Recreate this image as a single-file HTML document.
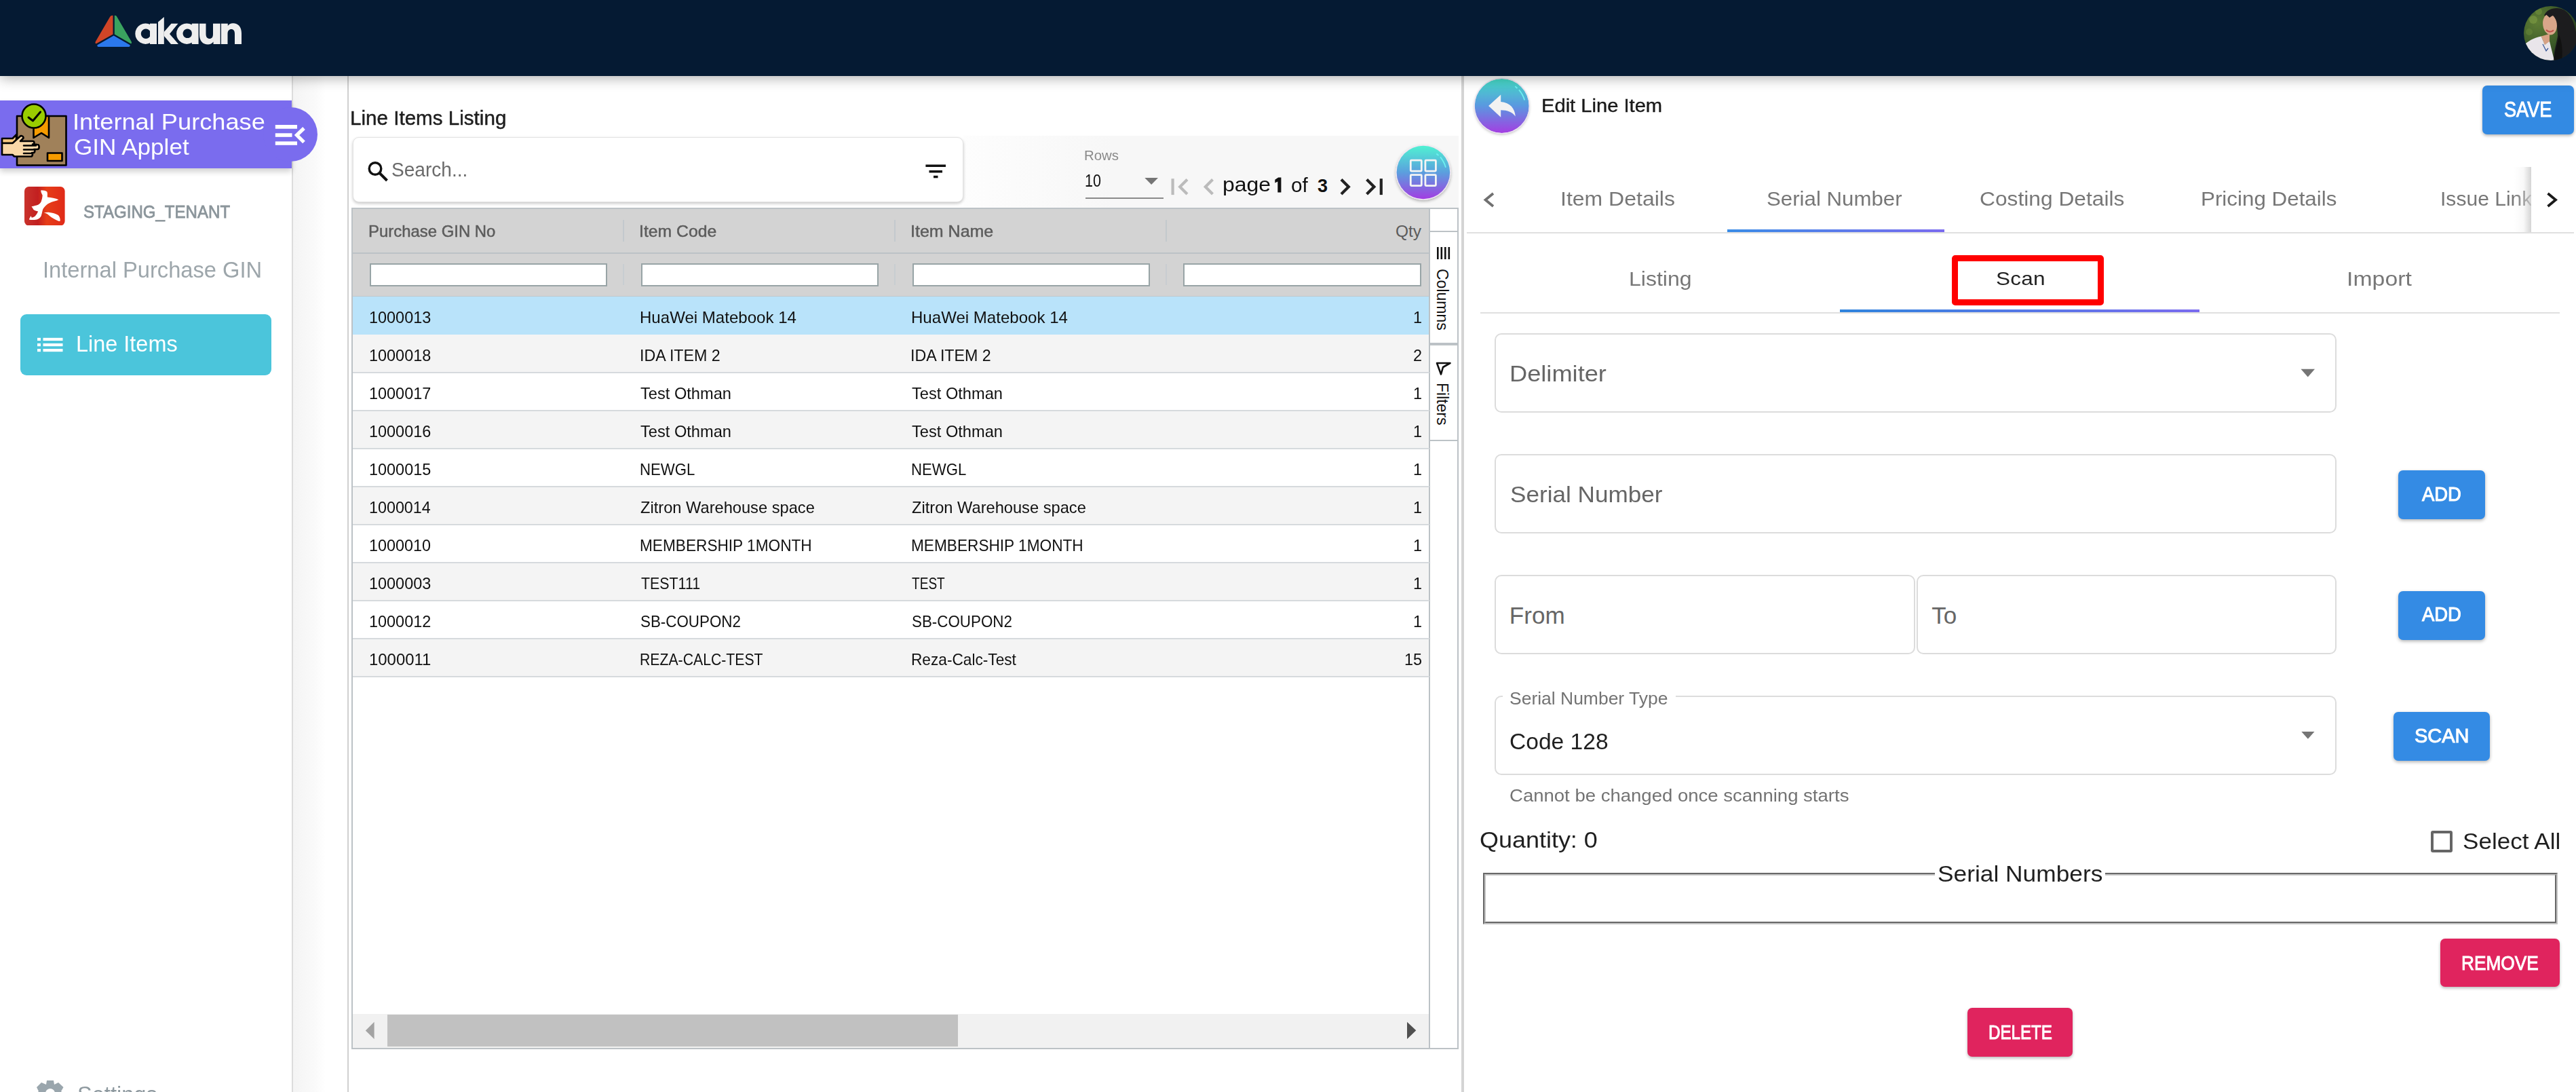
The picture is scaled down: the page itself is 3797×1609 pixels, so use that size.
<!DOCTYPE html>
<html><head><meta charset="utf-8"><title>akaun</title>
<style>
html,body{margin:0;padding:0;}
body{width:3797px;height:1609px;overflow:hidden;position:relative;background:#fff;font-family:"Liberation Sans",sans-serif;}
.b{position:absolute;}
.t{position:absolute;white-space:pre;font-family:"Liberation Sans",sans-serif;}
</style></head><body>
<div class="b" style="left:0.0px;top:112.0px;width:431.0px;height:1497.0px;background:#fff;"></div>
<div class="b" style="left:430.2px;top:112.0px;width:1.6px;height:1497.0px;background:#dcdcdc;"></div>
<div class="b" style="left:432.0px;top:112.0px;width:80.0px;height:1497.0px;background:linear-gradient(to right,#f4f4f4,#fafafa 40%,#fff 60%);"></div>
<div class="b" style="left:512.0px;top:112.0px;width:2.0px;height:1497.0px;background:#d0d0d0;"></div>
<div class="b" style="left:514.0px;top:112.0px;width:1640.0px;height:1497.0px;background:#fff;"></div>
<div class="b" style="left:2154.0px;top:112.0px;width:4.0px;height:1497.0px;background:#d4d4d4;"></div>
<div class="b" style="left:2158.0px;top:112.0px;width:1639.0px;height:1497.0px;background:#fff;"></div>
<div class="b" style="left:0.0px;top:0.0px;width:3797.0px;height:112.0px;background:#051a33;box-shadow:0 3px 18px rgba(0,0,0,0.32);z-index:5;"></div>
<svg class="b" style="left:130px;top:10px;z-index:6" width="240" height="80" viewBox="130 10 240 80">
<path d="M166.5 23 L166.5 50.5 L142.5 64 C140.5 65 140 63 141 61 L162 25 C163 23.5 165 22.5 166.5 23Z" fill="#d04527"/>
<path d="M168.8 23 L168.8 50.5 L192.3 64 C194 65 194.5 63 193.5 61 L172.5 25 C171.5 23.5 170.5 22.5 168.8 23Z" fill="#3aa35f"/>
<path d="M167.6 52.5 L144 66 C142.5 67 143.5 69 145.5 69 L189.5 69 C191.5 69 192.5 67 191 66Z" fill="#2b78ec"/>
<g fill="#eeeeee">
<path fill-rule="evenodd" d="M214.5 34.5 a15.2 15.2 0 1 0 0.01 0Z M215 42.5 a7.2 7.2 0 1 0 0.01 0Z"/>
<rect x="221" y="34.7" width="10" height="30.3"/>
<path d="M233 32.4 L241.8 25 L241.8 65 L233 65Z"/>
<path d="M241.8 47 L252.5 34.7 L262.5 34.7 L250 50 L263 65 L252 65 L241.8 53Z"/>
<path fill-rule="evenodd" d="M275.3 34.5 a15.2 15.2 0 1 0 0.01 0Z M276.3 42.5 a6.8 6.8 0 1 0 0.01 0Z"/>
<rect x="282.8" y="34.7" width="9.8" height="30.3"/>
<path d="M294 34.7 L303.5 34.7 L303.5 50 C303.5 55 306 57 309 57 C312 57 314 55 314 50 L314 34.7 L324.7 34.7 L324.7 65 L314.5 65 L314.5 61.5 C312.5 64 310 65.5 306.5 65.5 C299 65.5 294 60.5 294 51Z"/>
<path d="M326 65 L335.5 65 L335.5 50 C335.5 45 338 43 341 43 C344 43 346 45 346 50 L346 65 L356 65 L356 49 C356 39.5 351 34.2 343.5 34.2 C340 34.2 337.5 35.5 335.8 38 L335.8 34.7 L326 34.7Z"/>
</g>
</svg>
<svg class="b" style="left:3719.6px;top:8.9px;z-index:6" width="80" height="80" viewBox="0 0 80 80">
<defs><clipPath id="av"><circle cx="40" cy="40" r="40"/></clipPath>
<radialGradient id="fol" cx="0.25" cy="0.3" r="0.8"><stop offset="0" stop-color="#5f7d35"/><stop offset="0.6" stop-color="#3c5a28"/><stop offset="1" stop-color="#24381c"/></radialGradient></defs>
<g clip-path="url(#av)">
<rect width="80" height="80" fill="url(#fol)"/>
<circle cx="14" cy="20" r="6" fill="#7e9c45" opacity="0.6"/>
<circle cx="22" cy="8" r="5" fill="#6f8f3c" opacity="0.6"/>
<circle cx="8" cy="38" r="5" fill="#6a8a3a" opacity="0.5"/>
<path d="M30 14 C34 3 50 0 60 6 C72 14 76 30 78 45 C80 60 76 72 70 80 L44 80 C44 68 48 56 50 44 C50 34 48 24 42 16 Z" fill="#1c1c1e"/>
<path d="M25.6 44.6 L38 41 L38 53 L31 57 Z" fill="#d6a184"/>
<ellipse cx="38.5" cy="27" rx="10.3" ry="15.5" transform="rotate(-8 38.5 27)" fill="#d9a68a"/>
<path d="M33 35 C36 38.5 41 38.5 44 35.5" stroke="#c0504a" stroke-width="2" fill="none"/>
<path d="M32 12 C36 8 46 8 50 14 C47 13 42 13 38 17 C36 15 34 13 32 12Z" fill="#1c1c1e"/>
<path d="M0 58 C6 52 14 47 25.6 44.6 L31 57 L38 52 L45 80 L0 80 Z" fill="#e9e5ea"/>
<path d="M28 56 L33 66 L36 62" stroke="#3b5a9a" stroke-width="1.3" fill="none"/>
<path d="M44 80 C46 66 50 54 52 42 C56 52 58 64 56 80Z" fill="#111"/>
</g></svg>
<div class="b" style="left:0.0px;top:148.0px;width:430.0px;height:99.5px;background:#7a6cee;box-shadow:0 5px 8px rgba(0,0,0,0.18);z-index:2;"></div>
<div class="b" style="left:388.0px;top:157.7px;width:80.0px;height:80.0px;background:#7a6cee;border-radius:40px;z-index:2;"></div>
<svg class="b" style="left:0;top:140px;z-index:3" width="110" height="110" viewBox="0 0 110 110">
<g stroke="#000" stroke-width="2.6" stroke-linejoin="round" stroke-linecap="round">
<rect x="25" y="31" width="72.5" height="72.5" fill="#a0815a"/>
<path d="M49.5 31 L72 31 L72 63 L61 56 L49.5 63Z" fill="#f59b00"/>
<rect x="70" y="85.5" width="21.5" height="11.5" fill="#f59b00"/>
<circle cx="50" cy="31" r="17.5" fill="#99cc00"/>
<path d="M42 33 L48.5 38 L59.5 25" fill="none" stroke-width="3"/>
<path d="M3 64 L18.5 64 L24 58.5 L24 71 L3 71Z" fill="#f8c880"/>
<path d="M3 71 L18.5 71 L29.5 61 C31 59.5 34.5 60 34.5 63.5 L30 68 L48 68 C51 68 51.5 72.5 48 72.5 L55 73 C58.5 73 58.5 80 55 80 L50 80 C52 80 52 85 49 85 L47 85 C48.5 85 48.5 90.5 45.5 90.5 L21 90.5 L18.5 88 L3 88Z" fill="#fad8a8"/>
<path d="M35 74.5 L53 74.5 M35 80.5 L51 80.5 M35 86 L47 86" fill="none"/>
</g></svg>
<svg class="b" style="left:400px;top:180px;z-index:3" width="55" height="40" viewBox="400 180 55 40">
<rect x="405.8" y="184" width="32.2" height="5.7" fill="#fff"/>
<rect x="405.8" y="196.3" width="24.7" height="5.5" fill="#fff"/>
<rect x="405.8" y="208.4" width="32.2" height="5.4" fill="#fff"/>
<path d="M448 189 L437.5 199 L448 209.5" stroke="#fff" stroke-width="5.2" fill="none"/>
</svg>
<div class="t" style="left:107.0px;top:162.7px;font-size:33.33px;line-height:33.33px;letter-spacing:0.00px;color:#fff;font-weight:normal;transform-origin:0 0;transform:scaleX(1.0867);z-index:3;">Internal Purchase</div>
<div class="t" style="left:108.5px;top:199.7px;font-size:33.33px;line-height:33.33px;letter-spacing:0.00px;color:#fff;font-weight:normal;transform-origin:0 0;transform:scaleX(1.0526);z-index:3;">GIN Applet</div>
<svg class="b" style="left:36.3px;top:274.9px" width="59.6" height="57.4" viewBox="0 0 59.6 57.4">
<defs><linearGradient id="tl" x1="0" x2="1"><stop offset="0" stop-color="#c9332c"/><stop offset="0.33" stop-color="#c21f20"/><stop offset="0.55" stop-color="#e63d18"/><stop offset="1" stop-color="#e02a18"/></linearGradient></defs>
<rect width="59.6" height="57.4" rx="6.5" fill="url(#tl)"/>
<path fill="#fff" d="M24.4 5.3 C28 5.3 31.5 6 33.3 7.5 C34.5 10 33.5 13 33.9 15.5 C39 16 46 17 50.4 19.2 C47 21 43 21.5 39.9 22.7 C35.5 24.5 32.5 26.5 30.7 28.7 C28.5 31 27 33 26.7 35.3 C26 38 25.5 41 24.7 43.2 C23.5 45.5 22 47 20.1 47.8 C17.5 49 15.5 49.1 13.5 49.1 C11 49.2 8.5 49 6.9 48.5 C7.5 46.5 8.5 44.5 9.6 43.2 C10 44 10.3 45 10.9 45.8 C12.5 45.5 14 44.8 15.5 43.8 C17.5 41.5 19.2 39 20.1 36.6 C17.5 36 15 35 13.5 34 C12.3 32 11.3 30.5 10.5 29.3 C14 28.3 17.5 27.8 20.1 26.7 C22.5 25.5 24 24 24.7 22.1 C25.8 19 26.5 16 26.7 12.9 C26 11 24.8 9.5 24.4 7.6 Z"/>
<path fill="#fff" d="M28.7 38.6 C31 38 34 37.8 36.6 37.9 C41 38.3 46 39.8 49.8 41.9 C52 43.8 52.8 47 52.7 50.4 L51.1 51.1 C47 49 43 47.5 39.9 45.2 C37 43 35 41 33.3 39.9 C31.5 39.2 30 38.9 28.7 38.6 Z"/>
</svg>
<div class="t" style="left:123.4px;top:299.5px;font-size:25.80px;line-height:25.80px;letter-spacing:0.00px;color:#8b959b;font-weight:normal;transform-origin:0 0;transform:scaleX(0.9325);-webkit-text-stroke:0.8px #8b959b;">STAGING_TENANT</div>
<div class="t" style="left:63.0px;top:380.7px;font-size:33.04px;line-height:33.04px;letter-spacing:0.00px;color:#9da6ab;font-weight:normal;transform-origin:0 0;transform:scaleX(0.9888);">Internal Purchase GIN</div>
<div class="b" style="left:30.0px;top:463.0px;width:370.0px;height:90.0px;background:#4bc5db;border-radius:9px;"></div>
<svg class="b" style="left:50px;top:490px" width="50" height="35" viewBox="50 490 50 35">
<g fill="#fff"><rect x="55" y="497.8" width="5" height="4.2"/><rect x="63.5" y="497.8" width="29" height="4.2"/>
<rect x="55" y="506" width="5" height="4.2"/><rect x="63.5" y="506" width="29" height="4.2"/>
<rect x="55" y="514" width="5" height="4.2"/><rect x="63.5" y="514" width="29" height="4.2"/></g></svg>
<div class="t" style="left:112.0px;top:490.8px;font-size:32.75px;line-height:32.75px;letter-spacing:0.00px;color:#fff;font-weight:normal;transform-origin:0 0;transform:scaleX(0.9902);">Line Items</div>
<svg class="b" style="left:50px;top:1585px" width="50" height="30" viewBox="50 1585 50 30">
<path fill="#9aa6ad" fill-rule="evenodd" d="M69 1592 L79 1592 L80 1598 L86 1595 L93.5 1602 L90 1608 L95 1612 L95 1620 L50 1620 L52 1612 L57 1608 L54 1602 L61 1595 L68 1598Z M74 1604 a7 7 0 1 0 0.01 0Z"/>
</svg>
<div class="t" style="left:114.3px;top:1595.9px;font-size:33.33px;line-height:33.33px;letter-spacing:0.00px;color:#8e999f;font-weight:normal;transform-origin:0 0;transform:scaleX(0.9779);">Settings</div>
<div class="t" style="left:515.8px;top:158.6px;font-size:30.29px;line-height:30.29px;letter-spacing:0.00px;color:#1f1f1f;font-weight:normal;transform-origin:0 0;transform:scaleX(0.9775);-webkit-text-stroke:0.5px #1f1f1f;">Line Items Listing</div>
<div class="b" style="left:1420.0px;top:200.0px;width:730.0px;height:106.0px;background:linear-gradient(to right,#fdfdfd,#f7f7f7 30%,#f7f7f7);"></div>
<div class="b" style="left:519.5px;top:201.5px;width:900.5px;height:96.0px;background:#fff;border-radius:9px;border:1px solid #e3e3e3;box-sizing:border-box;box-shadow:0 2px 4px rgba(0,0,0,0.22);"></div>
<svg class="b" style="left:538px;top:232px" width="40" height="40" viewBox="538 232 40 40">
<circle cx="553" cy="248.5" r="8.8" stroke="#111" stroke-width="3.4" fill="none"/>
<path d="M559.5 255 L570.5 266" stroke="#111" stroke-width="4" stroke-linecap="butt"/>
</svg>
<div class="t" style="left:577.2px;top:236.0px;font-size:28.70px;line-height:28.70px;letter-spacing:0.00px;color:#6b6b6b;font-weight:normal;transform-origin:0 0;transform:scaleX(0.9789);">Search...</div>
<svg class="b" style="left:1360px;top:238px" width="40" height="30" viewBox="1360 238 40 30">
<rect x="1364.4" y="242.5" width="29.6" height="3.5" fill="#111"/>
<rect x="1369.5" y="251" width="19.5" height="3.5" fill="#111"/>
<rect x="1376" y="258.8" width="6.5" height="3.5" fill="#111"/>
</svg>
<div class="t" style="left:1598.2px;top:220.3px;font-size:19.42px;line-height:19.42px;letter-spacing:0.00px;color:#8a8a8a;font-weight:normal;transform-origin:0 0;transform:scaleX(1.0495);">Rows</div>
<div class="t" style="left:1598.8px;top:253.0px;font-size:26.67px;line-height:26.67px;letter-spacing:0.00px;color:#111;font-weight:normal;transform-origin:0 0;transform:scaleX(0.8075);">10</div>
<svg class="b" style="left:1680px;top:255px" width="35" height="40" viewBox="1680 255 35 40"><path d="M1687.3 262.1 L1707 262.1 L1697.15 272.1Z" fill="#757575"/></svg>
<div class="b" style="left:1599.8px;top:290.7px;width:115.2px;height:2.3px;background:#8a8a8a;"></div>
<svg class="b" style="left:1720px;top:255px" width="330" height="40" viewBox="1720 255 330 40">
<g fill="none" stroke-width="4.2">
<path d="M1728.6 263.2 L1728.6 287.1" stroke="#bbb"/>
<path d="M1750 264.5 L1739.2 275.2 L1750 286" stroke="#bbb"/>
<path d="M1787.5 264.5 L1776.8 275.2 L1787.5 286" stroke="#bbb"/>
<path d="M1977 264.5 L1987.8 275.2 L1977 286" stroke="#222"/>
<path d="M2014.6 264.5 L2025.4 275.2 L2014.6 286" stroke="#222"/>
<path d="M2035.8 263.2 L2035.8 287.1" stroke="#222"/>
</g></svg>
<div class="t" style="left:1801.6px;top:256.8px;font-size:29.50px;line-height:29.50px;letter-spacing:0.00px;color:#111;font-weight:normal;transform-origin:0 0;transform:scaleX(1.0843);">page</div>
<svg class="b" style="left:1875px;top:258px" width="20" height="30" viewBox="1875 258 20 30"><path d="M1879.3 264.8 L1884.2 261.4 L1888.4 261.4 L1888.4 283.6 L1883.3 283.6 L1883.3 267.6 L1879.3 269.6 Z" fill="#111"/></svg>
<div class="t" style="left:1903.0px;top:257.8px;font-size:29.50px;line-height:29.50px;letter-spacing:0.00px;color:#111;font-weight:normal;transform-origin:0 0;transform:scaleX(1.0085);">of</div>
<div class="t" style="left:1942.0px;top:260.7px;font-size:27.00px;line-height:27.00px;letter-spacing:0.00px;color:#111;font-weight:bold;">3</div>
<svg class="b" style="left:2043px;top:200px;overflow:visible" width="110" height="110" viewBox="2043 200 110 110">
<defs><linearGradient id="gv" x1="0" y1="0" x2="0" y2="1"><stop offset="0" stop-color="#50f2d2"/><stop offset="0.5" stop-color="#5b9fde"/><stop offset="1" stop-color="#a23de2"/></linearGradient>
<filter id="sh2" x="-20%" y="-20%" width="140%" height="140%"><feDropShadow dx="0" dy="2" stdDeviation="2.2" flood-opacity="0.3"/></filter></defs>
<circle cx="2097.9" cy="254" r="40.5" fill="#efe6f3" filter="url(#sh2)"/>
<circle cx="2097.9" cy="254" r="39.3" fill="url(#gv)"/>
<g fill="none" stroke="#f4f4f4" stroke-width="2.8" stroke-linejoin="round">
<rect x="2079.3" y="236.2" width="16" height="15.9" rx="1"/><rect x="2100.9" y="236.2" width="15.5" height="15.9" rx="1"/>
<rect x="2079.3" y="257.7" width="16" height="15.9" rx="1"/><rect x="2100.9" y="257.7" width="15.5" height="15.9" rx="1"/>
</g>
<path d="M2117.3 226.5 L2120.5 229 M2123 231.3 C2126.5 235.5 2129.3 241 2131 246.7" stroke="#6ff0f0" stroke-width="1.8" fill="none"/>
</svg>
<div class="b" style="left:518.0px;top:306.0px;width:1632.0px;height:1240.0px;border:2px solid #bcc2c6;box-sizing:border-box;background:#fff;"></div>
<div class="b" style="left:520.0px;top:308.0px;width:1587.0px;height:129.0px;background:#d3d3d3;"></div>
<div class="b" style="left:520.0px;top:371.5px;width:1587.0px;height:2.0px;background:#bcc2c6;"></div>
<div class="b" style="left:520.0px;top:435.5px;width:1587.0px;height:1.5px;background:#c2c7cb;"></div>
<div class="b" style="left:918.0px;top:324.0px;width:2.0px;height:32.0px;background:#c3c9cd;"></div>
<div class="b" style="left:918.0px;top:389.0px;width:2.0px;height:30.5px;background:#c8cdd1;"></div>
<div class="b" style="left:1318.0px;top:324.0px;width:2.0px;height:32.0px;background:#c3c9cd;"></div>
<div class="b" style="left:1318.0px;top:389.0px;width:2.0px;height:30.5px;background:#c8cdd1;"></div>
<div class="b" style="left:1718.0px;top:324.0px;width:2.0px;height:32.0px;background:#c3c9cd;"></div>
<div class="b" style="left:1718.0px;top:389.0px;width:2.0px;height:30.5px;background:#c8cdd1;"></div>
<div class="b" style="left:544.7px;top:387.9px;width:350.5px;height:34.5px;background:#fff;border:2px solid #98a4a6;box-sizing:border-box;"></div>
<div class="b" style="left:944.6px;top:387.9px;width:350.4px;height:34.5px;background:#fff;border:2px solid #98a4a6;box-sizing:border-box;"></div>
<div class="b" style="left:1344.6px;top:387.9px;width:350.6px;height:34.5px;background:#fff;border:2px solid #98a4a6;box-sizing:border-box;"></div>
<div class="b" style="left:1744.3px;top:387.9px;width:350.7px;height:34.5px;background:#fff;border:2px solid #98a4a6;box-sizing:border-box;"></div>
<div class="t" style="left:542.7px;top:328.9px;font-size:24.50px;line-height:24.50px;letter-spacing:0.00px;color:#5c5c5c;font-weight:normal;transform-origin:0 0;transform:scaleX(0.9759);-webkit-text-stroke:0.5px #5c5c5c;">Purchase GIN No</div>
<div class="t" style="left:942.3px;top:328.9px;font-size:24.50px;line-height:24.50px;letter-spacing:0.00px;color:#5c5c5c;font-weight:normal;transform-origin:0 0;transform:scaleX(1.0105);-webkit-text-stroke:0.5px #5c5c5c;">Item Code</div>
<div class="t" style="left:1342.3px;top:328.9px;font-size:24.50px;line-height:24.50px;letter-spacing:0.00px;color:#5c5c5c;font-weight:normal;transform-origin:0 0;transform:scaleX(1.0206);-webkit-text-stroke:0.5px #5c5c5c;">Item Name</div>
<div class="t" style="left:2057.0px;top:328.9px;font-size:24.50px;line-height:24.50px;letter-spacing:0.00px;color:#5c5c5c;font-weight:normal;">Qty</div>
<div class="b" style="left:520.0px;top:437.0px;width:1587.0px;height:56.0px;background:#b9e3fa;"></div>
<div class="t" style="left:543.5px;top:455.5px;font-size:24.00px;line-height:24.00px;letter-spacing:0.00px;color:#111;font-weight:normal;transform-origin:0 0;transform:scaleX(0.9768);">1000013</div>
<div class="t" style="left:942.9px;top:455.5px;font-size:24.00px;line-height:24.00px;letter-spacing:0.00px;color:#111;font-weight:normal;transform-origin:0 0;transform:scaleX(1.0024);">HuaWei Matebook 14</div>
<div class="t" style="left:1342.6px;top:455.5px;font-size:24.00px;line-height:24.00px;letter-spacing:0.00px;color:#111;font-weight:normal;transform-origin:0 0;transform:scaleX(1.0024);">HuaWei Matebook 14</div>
<div class="t" style="left:2083.0px;top:455.5px;font-size:24.00px;line-height:24.00px;letter-spacing:0.00px;color:#111;font-weight:normal;transform-origin:0 0;transform:scaleX(0.9770);">1</div>
<div class="b" style="left:520.0px;top:493.0px;width:1587.0px;height:56.0px;background:#f4f4f4;"></div>
<div class="b" style="left:520.0px;top:548.0px;width:1587.0px;height:2.0px;background:#d6dadd;z-index:1;"></div>
<div class="t" style="left:543.5px;top:511.5px;font-size:24.00px;line-height:24.00px;letter-spacing:0.00px;color:#111;font-weight:normal;transform-origin:0 0;transform:scaleX(0.9768);">1000018</div>
<div class="t" style="left:942.7px;top:511.5px;font-size:24.00px;line-height:24.00px;letter-spacing:0.00px;color:#111;font-weight:normal;transform-origin:0 0;transform:scaleX(0.9677);">IDA ITEM 2</div>
<div class="t" style="left:1342.4px;top:511.5px;font-size:24.00px;line-height:24.00px;letter-spacing:0.00px;color:#111;font-weight:normal;transform-origin:0 0;transform:scaleX(0.9677);">IDA ITEM 2</div>
<div class="t" style="left:2083.0px;top:511.5px;font-size:24.00px;line-height:24.00px;letter-spacing:0.00px;color:#111;font-weight:normal;transform-origin:0 0;transform:scaleX(0.9770);">2</div>
<div class="b" style="left:520.0px;top:549.0px;width:1587.0px;height:56.0px;background:#fff;"></div>
<div class="b" style="left:520.0px;top:604.0px;width:1587.0px;height:2.0px;background:#d6dadd;z-index:1;"></div>
<div class="t" style="left:543.5px;top:567.5px;font-size:24.00px;line-height:24.00px;letter-spacing:0.00px;color:#111;font-weight:normal;transform-origin:0 0;transform:scaleX(0.9768);">1000017</div>
<div class="t" style="left:944.4px;top:567.5px;font-size:24.00px;line-height:24.00px;letter-spacing:0.00px;color:#111;font-weight:normal;transform-origin:0 0;transform:scaleX(0.9843);">Test Othman</div>
<div class="t" style="left:1344.1px;top:567.5px;font-size:24.00px;line-height:24.00px;letter-spacing:0.00px;color:#111;font-weight:normal;transform-origin:0 0;transform:scaleX(0.9843);">Test Othman</div>
<div class="t" style="left:2083.0px;top:567.5px;font-size:24.00px;line-height:24.00px;letter-spacing:0.00px;color:#111;font-weight:normal;transform-origin:0 0;transform:scaleX(0.9770);">1</div>
<div class="b" style="left:520.0px;top:605.0px;width:1587.0px;height:56.0px;background:#f4f4f4;"></div>
<div class="b" style="left:520.0px;top:660.0px;width:1587.0px;height:2.0px;background:#d6dadd;z-index:1;"></div>
<div class="t" style="left:543.5px;top:623.5px;font-size:24.00px;line-height:24.00px;letter-spacing:0.00px;color:#111;font-weight:normal;transform-origin:0 0;transform:scaleX(0.9768);">1000016</div>
<div class="t" style="left:944.4px;top:623.5px;font-size:24.00px;line-height:24.00px;letter-spacing:0.00px;color:#111;font-weight:normal;transform-origin:0 0;transform:scaleX(0.9843);">Test Othman</div>
<div class="t" style="left:1344.1px;top:623.5px;font-size:24.00px;line-height:24.00px;letter-spacing:0.00px;color:#111;font-weight:normal;transform-origin:0 0;transform:scaleX(0.9843);">Test Othman</div>
<div class="t" style="left:2083.0px;top:623.5px;font-size:24.00px;line-height:24.00px;letter-spacing:0.00px;color:#111;font-weight:normal;transform-origin:0 0;transform:scaleX(0.9770);">1</div>
<div class="b" style="left:520.0px;top:661.0px;width:1587.0px;height:56.0px;background:#fff;"></div>
<div class="b" style="left:520.0px;top:716.0px;width:1587.0px;height:2.0px;background:#d6dadd;z-index:1;"></div>
<div class="t" style="left:543.5px;top:679.5px;font-size:24.00px;line-height:24.00px;letter-spacing:0.00px;color:#111;font-weight:normal;transform-origin:0 0;transform:scaleX(0.9768);">1000015</div>
<div class="t" style="left:943.1px;top:679.5px;font-size:24.00px;line-height:24.00px;letter-spacing:0.00px;color:#111;font-weight:normal;transform-origin:0 0;transform:scaleX(0.9243);">NEWGL</div>
<div class="t" style="left:1342.8px;top:679.5px;font-size:24.00px;line-height:24.00px;letter-spacing:0.00px;color:#111;font-weight:normal;transform-origin:0 0;transform:scaleX(0.9243);">NEWGL</div>
<div class="t" style="left:2083.0px;top:679.5px;font-size:24.00px;line-height:24.00px;letter-spacing:0.00px;color:#111;font-weight:normal;transform-origin:0 0;transform:scaleX(0.9770);">1</div>
<div class="b" style="left:520.0px;top:717.0px;width:1587.0px;height:56.0px;background:#f4f4f4;"></div>
<div class="b" style="left:520.0px;top:772.0px;width:1587.0px;height:2.0px;background:#d6dadd;z-index:1;"></div>
<div class="t" style="left:543.5px;top:735.5px;font-size:24.00px;line-height:24.00px;letter-spacing:0.00px;color:#111;font-weight:normal;transform-origin:0 0;transform:scaleX(0.9714);">1000014</div>
<div class="t" style="left:944.2px;top:735.5px;font-size:24.00px;line-height:24.00px;letter-spacing:0.00px;color:#111;font-weight:normal;transform-origin:0 0;transform:scaleX(0.9855);">Zitron Warehouse space</div>
<div class="t" style="left:1343.9px;top:735.5px;font-size:24.00px;line-height:24.00px;letter-spacing:0.00px;color:#111;font-weight:normal;transform-origin:0 0;transform:scaleX(0.9855);">Zitron Warehouse space</div>
<div class="t" style="left:2083.0px;top:735.5px;font-size:24.00px;line-height:24.00px;letter-spacing:0.00px;color:#111;font-weight:normal;transform-origin:0 0;transform:scaleX(0.9770);">1</div>
<div class="b" style="left:520.0px;top:773.0px;width:1587.0px;height:56.0px;background:#fff;"></div>
<div class="b" style="left:520.0px;top:828.0px;width:1587.0px;height:2.0px;background:#d6dadd;z-index:1;"></div>
<div class="t" style="left:543.5px;top:791.5px;font-size:24.00px;line-height:24.00px;letter-spacing:0.00px;color:#111;font-weight:normal;transform-origin:0 0;transform:scaleX(0.9741);">1000010</div>
<div class="t" style="left:943.0px;top:791.5px;font-size:24.00px;line-height:24.00px;letter-spacing:0.00px;color:#111;font-weight:normal;transform-origin:0 0;transform:scaleX(0.9434);">MEMBERSHIP 1MONTH</div>
<div class="t" style="left:1342.7px;top:791.5px;font-size:24.00px;line-height:24.00px;letter-spacing:0.00px;color:#111;font-weight:normal;transform-origin:0 0;transform:scaleX(0.9434);">MEMBERSHIP 1MONTH</div>
<div class="t" style="left:2083.0px;top:791.5px;font-size:24.00px;line-height:24.00px;letter-spacing:0.00px;color:#111;font-weight:normal;transform-origin:0 0;transform:scaleX(0.9770);">1</div>
<div class="b" style="left:520.0px;top:829.0px;width:1587.0px;height:56.0px;background:#f4f4f4;"></div>
<div class="b" style="left:520.0px;top:884.0px;width:1587.0px;height:2.0px;background:#d6dadd;z-index:1;"></div>
<div class="t" style="left:543.5px;top:847.5px;font-size:24.00px;line-height:24.00px;letter-spacing:0.00px;color:#111;font-weight:normal;transform-origin:0 0;transform:scaleX(0.9768);">1000003</div>
<div class="t" style="left:944.5px;top:847.5px;font-size:24.00px;line-height:24.00px;letter-spacing:0.00px;color:#111;font-weight:normal;transform-origin:0 0;transform:scaleX(0.8904);">TEST111</div>
<div class="t" style="left:1344.2px;top:847.5px;font-size:24.00px;line-height:24.00px;letter-spacing:0.00px;color:#111;font-weight:normal;transform-origin:0 0;transform:scaleX(0.7950);">TEST</div>
<div class="t" style="left:2083.0px;top:847.5px;font-size:24.00px;line-height:24.00px;letter-spacing:0.00px;color:#111;font-weight:normal;transform-origin:0 0;transform:scaleX(0.9770);">1</div>
<div class="b" style="left:520.0px;top:885.0px;width:1587.0px;height:56.0px;background:#fff;"></div>
<div class="b" style="left:520.0px;top:940.0px;width:1587.0px;height:2.0px;background:#d6dadd;z-index:1;"></div>
<div class="t" style="left:543.5px;top:903.5px;font-size:24.00px;line-height:24.00px;letter-spacing:0.00px;color:#111;font-weight:normal;transform-origin:0 0;transform:scaleX(0.9768);">1000012</div>
<div class="t" style="left:944.0px;top:903.5px;font-size:24.00px;line-height:24.00px;letter-spacing:0.00px;color:#111;font-weight:normal;transform-origin:0 0;transform:scaleX(0.9323);">SB-COUPON2</div>
<div class="t" style="left:1343.7px;top:903.5px;font-size:24.00px;line-height:24.00px;letter-spacing:0.00px;color:#111;font-weight:normal;transform-origin:0 0;transform:scaleX(0.9323);">SB-COUPON2</div>
<div class="t" style="left:2083.0px;top:903.5px;font-size:24.00px;line-height:24.00px;letter-spacing:0.00px;color:#111;font-weight:normal;transform-origin:0 0;transform:scaleX(0.9770);">1</div>
<div class="b" style="left:520.0px;top:941.0px;width:1587.0px;height:56.0px;background:#f4f4f4;"></div>
<div class="b" style="left:520.0px;top:996.0px;width:1587.0px;height:2.0px;background:#d6dadd;z-index:1;"></div>
<div class="t" style="left:543.5px;top:959.5px;font-size:24.00px;line-height:24.00px;letter-spacing:0.00px;color:#111;font-weight:normal;transform-origin:0 0;transform:scaleX(0.9961);">1000011</div>
<div class="t" style="left:943.1px;top:959.5px;font-size:24.00px;line-height:24.00px;letter-spacing:0.00px;color:#111;font-weight:normal;transform-origin:0 0;transform:scaleX(0.8842);">REZA-CALC-TEST</div>
<div class="t" style="left:1342.7px;top:959.5px;font-size:24.00px;line-height:24.00px;letter-spacing:0.00px;color:#111;font-weight:normal;transform-origin:0 0;transform:scaleX(0.9440);">Reza-Calc-Test</div>
<div class="t" style="left:2070.1px;top:959.5px;font-size:24.00px;line-height:24.00px;letter-spacing:0.00px;color:#111;font-weight:normal;transform-origin:0 0;transform:scaleX(0.9770);">15</div>
<div class="b" style="left:520.0px;top:1494.0px;width:1586.0px;height:50.0px;background:#f1f1f1;"></div>
<div class="b" style="left:571.0px;top:1495.0px;width:840.5px;height:46.5px;background:#c1c1c1;"></div>
<svg class="b" style="left:530px;top:1500px" width="30" height="40" viewBox="530 1500 30 40"><path d="M551.6 1505.8 L551.6 1531 L538.8 1518.4Z" fill="#a3a3a3"/></svg>
<svg class="b" style="left:2065px;top:1500px" width="30" height="40" viewBox="2065 1500 30 40"><path d="M2074 1505.7 L2074 1531 L2087.3 1518.35Z" fill="#505050"/></svg>
<div class="b" style="left:2106.0px;top:308.0px;width:2.0px;height:1236.0px;background:#bcc2c6;"></div>
<div class="b" style="left:2108.0px;top:340.0px;width:40.0px;height:2.0px;background:#bcc2c6;"></div>
<div class="b" style="left:2108.0px;top:505.0px;width:40.0px;height:3.5px;background:#bcc2c6;"></div>
<div class="b" style="left:2108.0px;top:648.0px;width:40.0px;height:2.0px;background:#bcc2c6;"></div>
<svg class="b" style="left:2110px;top:355px" width="35" height="35" viewBox="2110 355 35 35">
<g fill="#111"><rect x="2118" y="364" width="2.6" height="18"/><rect x="2123.5" y="364" width="2.6" height="18"/><rect x="2129" y="364" width="2.6" height="18"/><rect x="2134.5" y="364" width="2.6" height="18"/></g></svg>
<svg class="b" style="left:2110px;top:525px" width="35" height="35" viewBox="2110 525 35 35">
<path d="M2137.5 535 L2118 535 L2124 551.5 L2127 541 Z" fill="none" stroke="#111" stroke-width="2.6" stroke-linejoin="round"/></svg>
<div class="t" style="left:2136.5px;top:396px;font-size:23px;line-height:23px;color:#111;transform-origin:0 0;transform:rotate(90deg) scaleX(1.0)">Columns</div>
<div class="t" style="left:2136.5px;top:564px;font-size:23px;line-height:23px;color:#111;transform-origin:0 0;transform:rotate(90deg) scaleX(1.0)">Filters</div>
<svg class="b" style="left:2165px;top:108px;overflow:visible" width="100" height="100" viewBox="2165 108 100 100">
<defs><linearGradient id="bk" x1="0" y1="0" x2="0" y2="1"><stop offset="0" stop-color="#45dcc6"/><stop offset="0.5" stop-color="#5a98e0"/><stop offset="1" stop-color="#a43ee2"/></linearGradient>
<filter id="sh" x="-20%" y="-20%" width="140%" height="140%"><feDropShadow dx="0" dy="2" stdDeviation="2" flood-opacity="0.3"/></filter></defs>
<circle cx="2213.7" cy="156" r="40" fill="url(#bk)" filter="url(#sh)"/>
<circle cx="2213.7" cy="156" r="40.6" fill="none" stroke="#ece3f2" stroke-width="1.2"/>
<path d="M2194.1 155.9 L2212.2 139.5 L2212.2 150 C2226 151 2233 160 2233.7 171.5 C2229 165 2222 162.2 2212.2 162.2 L2212.2 172.8 Z" fill="#f2f2f2"/>
<path d="M2233.3 127.3 L2236.5 130 M2239 132.3 C2242.5 136.5 2245.5 141.5 2247.2 147.5" stroke="#6ff0f0" stroke-width="1.8" fill="none"/>
</svg>
<div class="t" style="left:2271.9px;top:140.7px;font-size:28.26px;line-height:28.26px;letter-spacing:0.00px;color:#1a1a1a;font-weight:normal;transform-origin:0 0;transform:scaleX(1.0311);-webkit-text-stroke:0.4px #1a1a1a;">Edit Line Item</div>
<div class="b" style="left:3659.0px;top:126.0px;width:135.0px;height:71.5px;background:#338ae3;border-radius:7px;box-shadow:0 2px 4px rgba(0,0,0,0.3);"></div>
<div class="t" style="left:3690.7px;top:145.8px;font-size:30.43px;line-height:30.43px;letter-spacing:0.00px;color:#fff;font-weight:normal;transform-origin:0 0;transform:scaleX(0.8918);-webkit-text-stroke:1px #fff;">SAVE</div>
<div class="b" style="left:2162.0px;top:342.0px;width:1632.0px;height:2.0px;background:#e0e0e0;"></div>
<div class="b" style="left:2546.0px;top:337.6px;width:320.0px;height:4.2px;background:linear-gradient(to right,#3a8ce6,#7a6bef);"></div>
<svg class="b" style="left:2180px;top:278px" width="30" height="35" viewBox="2180 278 30 35"><path d="M2201 285 L2189.5 294.5 L2201 304" stroke="#707070" stroke-width="3.8" fill="none"/></svg>
<div class="t" style="left:2300.1px;top:277.9px;font-size:30.14px;line-height:30.14px;letter-spacing:0.00px;color:#777777;font-weight:normal;transform-origin:0 0;transform:scaleX(1.0620);">Item Details</div>
<div class="t" style="left:2604.2px;top:277.9px;font-size:30.14px;line-height:30.14px;letter-spacing:0.00px;color:#777777;font-weight:normal;transform-origin:0 0;transform:scaleX(1.0363);">Serial Number</div>
<div class="t" style="left:2918.3px;top:277.9px;font-size:30.14px;line-height:30.14px;letter-spacing:0.00px;color:#777777;font-weight:normal;transform-origin:0 0;transform:scaleX(1.0531);">Costing Details</div>
<div class="t" style="left:3244.4px;top:277.9px;font-size:30.14px;line-height:30.14px;letter-spacing:0.00px;color:#777777;font-weight:normal;transform-origin:0 0;transform:scaleX(1.0408);">Pricing Details</div>
<div class="t" style="left:3597.3px;top:277.9px;font-size:30.14px;line-height:30.14px;letter-spacing:0.00px;color:#777777;font-weight:normal;transform-origin:0 0;transform:scaleX(0.9981);">Issue Link</div>
<div class="b" style="left:3706.0px;top:246.0px;width:24.5px;height:96.0px;background:linear-gradient(to right,rgba(230,230,230,0),rgba(235,235,235,0.35) 55%,rgba(205,205,205,0.85));"></div>
<div class="b" style="left:3730.5px;top:246.0px;width:66.5px;height:96.0px;background:#fff;"></div>
<svg class="b" style="left:3745px;top:278px" width="30" height="35" viewBox="3745 278 30 35"><path d="M3755.5 285 L3767 294.5 L3755.5 304" stroke="#1a1a1a" stroke-width="3.8" fill="none"/></svg>
<div class="b" style="left:2182.0px;top:460.0px;width:1591.0px;height:2.0px;background:#e0e0e0;"></div>
<div class="b" style="left:2712.0px;top:456.0px;width:530.0px;height:4.0px;background:linear-gradient(to right,#2f84dd,#7a6bef);"></div>
<div class="t" style="left:2400.7px;top:396.2px;font-size:30.29px;line-height:30.29px;letter-spacing:0.00px;color:#777777;font-weight:normal;transform-origin:0 0;transform:scaleX(1.0566);">Listing</div>
<div class="t" style="left:2942.2px;top:397.2px;font-size:28.12px;line-height:28.12px;letter-spacing:0.26px;color:#222;font-weight:normal;transform-origin:0 0;transform:scaleX(1.1200);">Scan</div>
<div class="t" style="left:3458.9px;top:395.9px;font-size:30.14px;line-height:30.14px;letter-spacing:0.06px;color:#777777;font-weight:normal;transform-origin:0 0;transform:scaleX(1.1200);">Import</div>
<div class="b" style="left:2877.0px;top:376.0px;width:224.0px;height:74.0px;border:9px solid #ff0000;border-radius:5px;box-sizing:border-box;"></div>
<div class="b" style="left:2203.0px;top:490.5px;width:1240.5px;height:117.5px;border:2px solid #dcdcdc;border-radius:10px;box-sizing:border-box;background:#fff;"></div>
<div class="b" style="left:2203.0px;top:669.0px;width:1240.5px;height:117.0px;border:2px solid #dcdcdc;border-radius:10px;box-sizing:border-box;background:#fff;"></div>
<div class="b" style="left:2203.0px;top:847.0px;width:619.5px;height:117.0px;border:2px solid #dcdcdc;border-radius:10px;box-sizing:border-box;background:#fff;"></div>
<div class="b" style="left:2824.5px;top:847.0px;width:619.0px;height:117.0px;border:2px solid #dcdcdc;border-radius:10px;box-sizing:border-box;background:#fff;"></div>
<div class="t" style="left:2224.5px;top:533.9px;font-size:33.77px;line-height:33.77px;letter-spacing:0.00px;color:#666666;font-weight:normal;transform-origin:0 0;transform:scaleX(1.0731);">Delimiter</div>
<div class="t" style="left:2225.9px;top:711.6px;font-size:33.91px;line-height:33.91px;letter-spacing:0.00px;color:#666666;font-weight:normal;transform-origin:0 0;transform:scaleX(1.0360);">Serial Number</div>
<div class="t" style="left:2224.8px;top:889.4px;font-size:35.07px;line-height:35.07px;letter-spacing:0.00px;color:#666666;font-weight:normal;">From</div>
<div class="t" style="left:2847.2px;top:889.4px;font-size:35.07px;line-height:35.07px;letter-spacing:0.00px;color:#666666;font-weight:normal;">To</div>
<svg class="b" style="left:3385px;top:538px" width="35" height="25" viewBox="3385 538 35 25"><path d="M3391.5 543.8 L3412 543.8 L3401.75 555.5Z" fill="#757575"/></svg>
<div class="b" style="left:3535.0px;top:693.3px;width:128.0px;height:71.9px;background:#348be4;border-radius:7px;box-shadow:0 2px 5px rgba(0,0,0,0.3);"></div>
<div class="t" style="left:3570.4px;top:713.8px;font-size:29.13px;line-height:29.13px;letter-spacing:0.00px;color:#fff;font-weight:normal;transform-origin:0 0;transform:scaleX(0.9421);-webkit-text-stroke:1px #fff;">ADD</div>
<div class="b" style="left:3535.0px;top:870.8px;width:128.0px;height:71.9px;background:#348be4;border-radius:7px;box-shadow:0 2px 5px rgba(0,0,0,0.3);"></div>
<div class="t" style="left:3570.4px;top:891.3px;font-size:29.13px;line-height:29.13px;letter-spacing:0.00px;color:#fff;font-weight:normal;transform-origin:0 0;transform:scaleX(0.9421);-webkit-text-stroke:1px #fff;">ADD</div>
<div class="b" style="left:2203.0px;top:1025.0px;width:1240.5px;height:117.0px;border:2px solid #dcdcdc;border-radius:10px;box-sizing:border-box;"></div>
<div class="b" style="left:2215.0px;top:1015.0px;width:255.0px;height:20.0px;background:#fff;"></div>
<div class="t" style="left:2225.2px;top:1016.7px;font-size:25.65px;line-height:25.65px;letter-spacing:0.00px;color:#737373;font-weight:normal;transform-origin:0 0;transform:scaleX(1.0323);">Serial Number Type</div>
<div class="t" style="left:2224.7px;top:1075.7px;font-size:33.04px;line-height:33.04px;letter-spacing:0.00px;color:#1f1f1f;font-weight:normal;transform-origin:0 0;transform:scaleX(1.0164);">Code 128</div>
<svg class="b" style="left:3385px;top:1072px" width="35" height="25" viewBox="3385 1072 35 25"><path d="M3392.3 1078 L3411.5 1078 L3401.9 1088.8Z" fill="#757575"/></svg>
<div class="b" style="left:3528.0px;top:1049.2px;width:141.6px;height:71.8px;background:#348be4;border-radius:7px;box-shadow:0 2px 5px rgba(0,0,0,0.3);"></div>
<div class="t" style="left:3558.8px;top:1069.3px;font-size:29.28px;line-height:29.28px;letter-spacing:0.00px;color:#fff;font-weight:normal;transform-origin:0 0;transform:scaleX(0.9904);-webkit-text-stroke:1px #fff;">SCAN</div>
<div class="t" style="left:2225.1px;top:1159.8px;font-size:24.93px;line-height:24.93px;letter-spacing:-0.00px;color:#737373;font-weight:normal;transform-origin:0 0;transform:scaleX(1.1045);">Cannot be changed once scanning starts</div>
<div class="t" style="left:2181.1px;top:1220.6px;font-size:33.62px;line-height:33.62px;letter-spacing:0.00px;color:#1f1f1f;font-weight:normal;transform-origin:0 0;transform:scaleX(1.0694);">Quantity: 0</div>
<div class="b" style="left:3583.0px;top:1224.2px;width:31.6px;height:31.6px;border:4px solid #666;border-radius:3px;box-sizing:border-box;"></div>
<div class="t" style="left:3630.4px;top:1222.7px;font-size:33.33px;line-height:33.33px;letter-spacing:0.00px;color:#1f1f1f;font-weight:normal;transform-origin:0 0;transform:scaleX(1.0529);">Select All</div>
<div class="b" style="left:2186.0px;top:1286.2px;width:1583.5px;height:76.3px;border:2px solid #686868;border-right-color:#c4c4c4;border-bottom-color:#c4c4c4;box-sizing:border-box;"></div>
<div class="b" style="left:2188.0px;top:1288.2px;width:1579.5px;height:72.3px;border:2px solid #c4c4c4;border-right-color:#686868;border-bottom-color:#686868;box-sizing:border-box;"></div>
<div class="b" style="left:2852.0px;top:1280.0px;width:251.0px;height:15.0px;background:#fff;"></div>
<div class="t" style="left:2856.1px;top:1270.6px;font-size:33.62px;line-height:33.62px;letter-spacing:0.00px;color:#1f1f1f;font-weight:normal;transform-origin:0 0;transform:scaleX(1.0509);">Serial Numbers</div>
<div class="b" style="left:3597.2px;top:1383.2px;width:176.1px;height:70.8px;background:#e0245e;border-radius:7px;box-shadow:0 2px 4px rgba(0,0,0,0.28);"></div>
<div class="t" style="left:3627.8px;top:1403.6px;font-size:29.71px;line-height:29.71px;letter-spacing:0.00px;color:#fff;font-weight:normal;transform-origin:0 0;transform:scaleX(0.8832);-webkit-text-stroke:1px #fff;">REMOVE</div>
<div class="b" style="left:2899.8px;top:1485.0px;width:155.6px;height:72.4px;background:#e0245e;border-radius:7px;box-shadow:0 2px 4px rgba(0,0,0,0.28);"></div>
<div class="t" style="left:2930.7px;top:1506.3px;font-size:29.57px;line-height:29.57px;letter-spacing:0.00px;color:#fff;font-weight:normal;transform-origin:0 0;transform:scaleX(0.8162);-webkit-text-stroke:1px #fff;">DELETE</div>
</body></html>
